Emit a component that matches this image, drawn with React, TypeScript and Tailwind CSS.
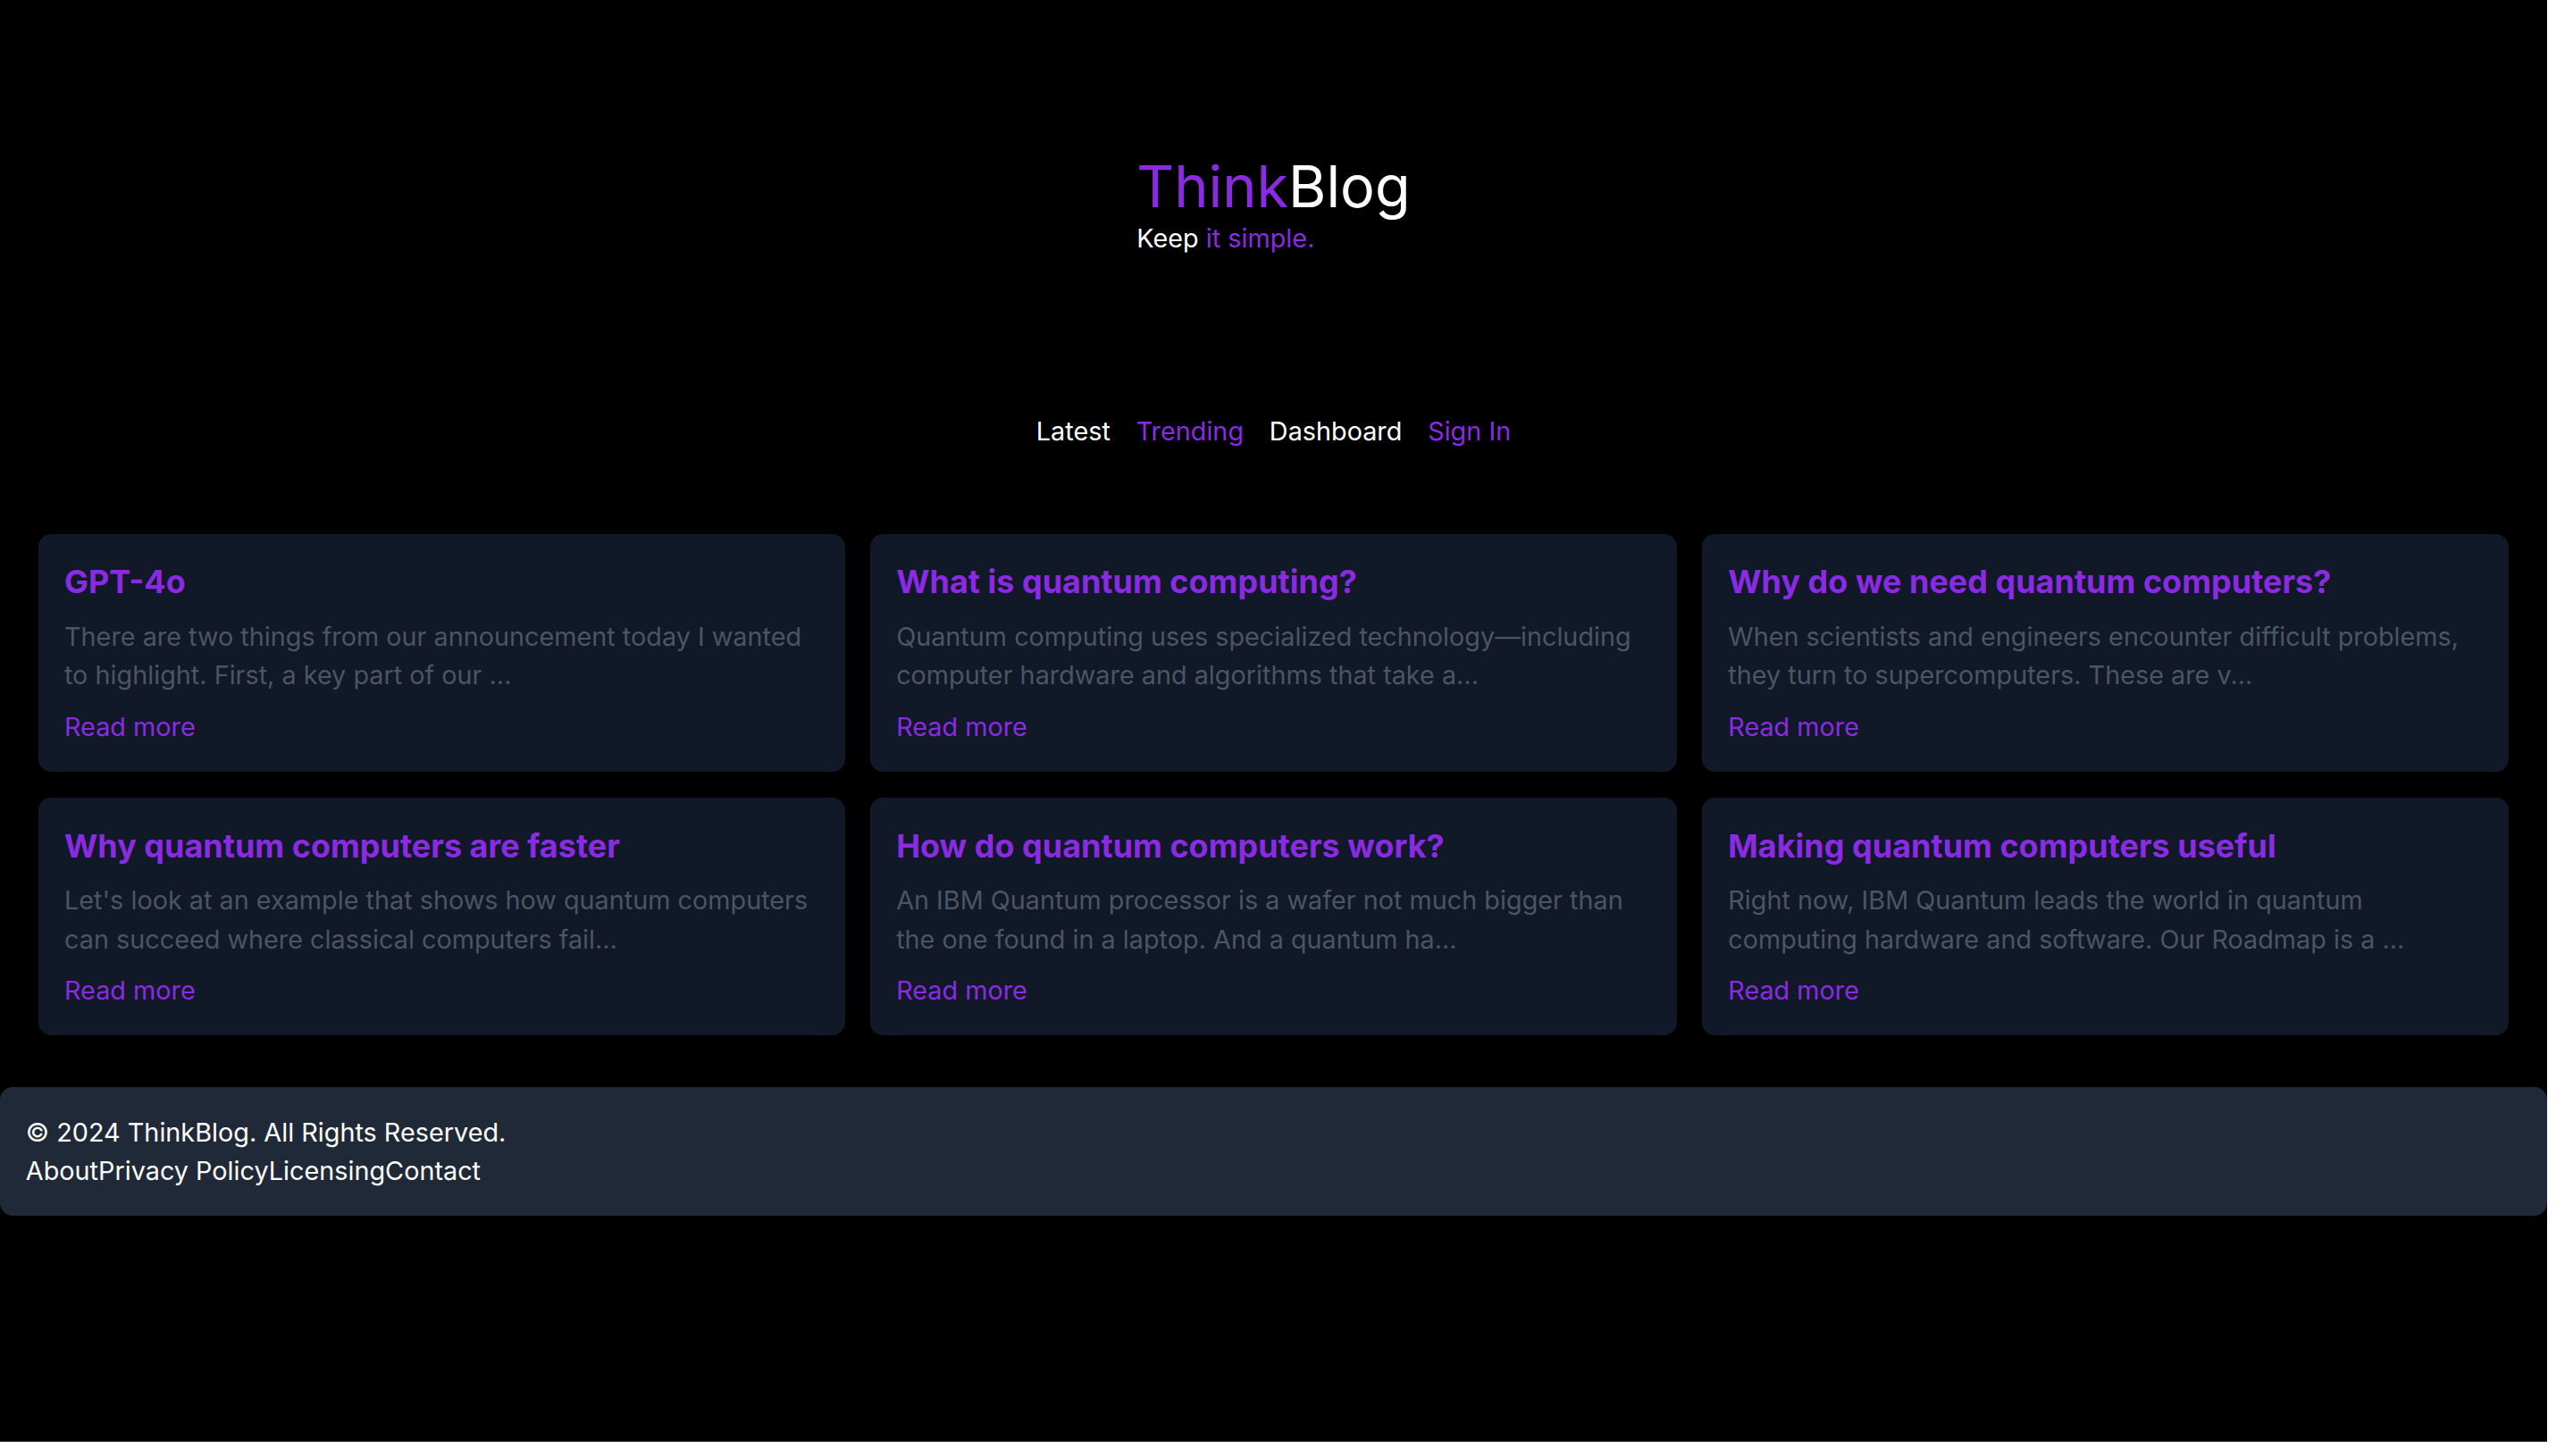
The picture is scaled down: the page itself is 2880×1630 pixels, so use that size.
const posts = [
  {
    title: "GPT-4o",
    excerpt:
      "There are two things from our announcement today I wanted to highlight. First, a key part of our ...",
  },
  {
    title: "What is quantum computing?",
    excerpt:
      "Quantum computing uses specialized technology\u2014including computer hardware and algorithms that take a...",
  },
  {
    title: "Why do we need quantum computers?",
    excerpt:
      "When scientists and engineers encounter difficult problems, they turn to supercomputers. These are v...",
  },
  {
    title: "Why quantum computers are faster",
    excerpt:
      "Let's look at an example that shows how quantum computers can succeed where classical computers fail...",
  },
  {
    title: "How do quantum computers work?",
    excerpt:
      "An IBM Quantum processor is a wafer not much bigger than the one found in a laptop. And a quantum ha...",
  },
  {
    title: "Making quantum computers useful",
    excerpt:
      "Right now, IBM Quantum leads the world in quantum computing hardware and software. Our Roadmap is a ...",
  },
];

function PostCard({ title, excerpt }: { title: string; excerpt: string }) {
  return (
    <article className="rounded-[14.4px] bg-[#111827] p-[28.8px]">
      <h2 className="mb-[14.4px] text-[36px] leading-[50.4px] font-bold text-[#8a2be2]">{title}</h2>
      <p className="mb-[14.4px] text-[28.8px] leading-[43.2px] text-[#4b5563]">{excerpt}</p>
      <a href="#" className="block text-[28.8px] leading-[43.2px] text-[#8a2be2]">
        Read more
      </a>
    </article>
  );
}

export default function App() {
  return (
    <div className="min-h-[1630px] w-full bg-white font-['Inter','Noto_Sans',sans-serif]">
      <div className="flex h-[1614px] w-[2851px] flex-col bg-black">
        <header className="flex justify-center pt-[172.8px]">
          <div className="text-left">
            <h1 className="text-[64.8px] leading-[72px] font-normal">
              <span className="text-[#8a2be2]">Think</span>
              <span className="text-white">Blog</span>
            </h1>
            <p className="text-[28.8px] leading-[43.2px] text-white">
              Keep <span className="text-[#8a2be2]">it simple.</span>
            </p>
          </div>
        </header>

        <nav className="mt-[172.8px] flex justify-center gap-[28.8px] text-[28.8px] leading-[43.2px]">
          <a href="#" className="text-white">Latest</a>
          <a href="#" className="text-[#8a2be2]">Trending</a>
          <a href="#" className="text-white">Dashboard</a>
          <a href="#" className="text-[#8a2be2]">Sign In</a>
        </nav>

        <main className="mt-[93.6px] grid grid-cols-3 gap-[28.8px] px-[43.2px]">
          {posts.map((p) => (
            <PostCard key={p.title} title={p.title} excerpt={p.excerpt} />
          ))}
        </main>

        <footer className="mt-[57.6px] rounded-[14.4px] bg-[#1f2937] p-[28.8px] text-[28.8px] leading-[43.2px] text-white">
          <p>© 2024 ThinkBlog. All Rights Reserved.</p>
          <div>
            <a href="#">About</a>
            <a href="#">Privacy Policy</a>
            <a href="#">Licensing</a>
            <a href="#">Contact</a>
          </div>
        </footer>
      </div>
    </div>
  );
}
